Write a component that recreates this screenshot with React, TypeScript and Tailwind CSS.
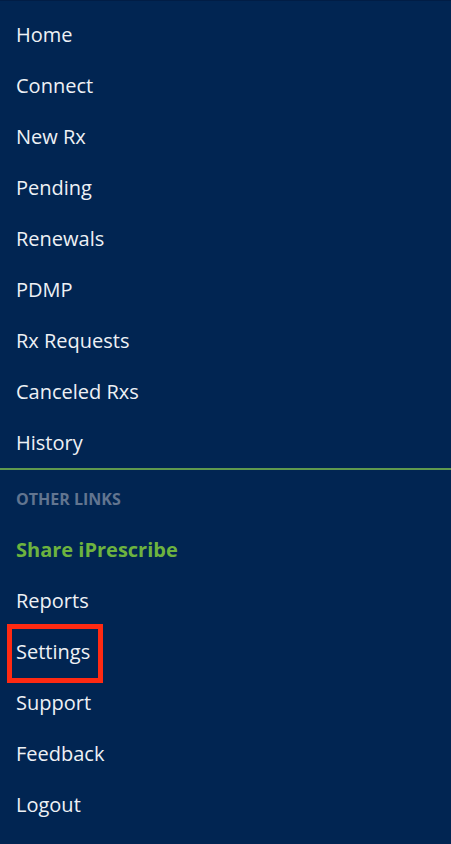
import React from "react";

const main = ["Home", "Connect", "New Rx", "Pending", "Renewals", "PDMP", "Rx Requests", "Canceled Rxs", "History"];

export default function App() {
  return (
    <div
      className="w-[451px] h-[844px] bg-[#012552] overflow-hidden border-t border-t-[#011d45]"
      style={{ fontFamily: '"Open Sans", sans-serif' }}
    >
      <div className="pt-[8px]">
        {main.map((m) => (
          <div key={m} className="h-[51px] flex items-center pl-[16px] text-[20px] text-[#eef1f5]">
            {m}
          </div>
        ))}
      </div>
      <div className="h-[2px] bg-[#5f9a4e]" />
      <div className="h-[54px] pt-[4px] flex items-center pl-[16px] text-[16px] font-bold text-[#627590]">
        OTHER LINKS
      </div>
      <div className="h-[51px] flex items-center pl-[16px] text-[20px] font-bold text-[#6db33f]">
        Share iPrescribe
      </div>
      <div className="h-[51px] flex items-center pl-[16px] text-[20px] text-[#eef1f5]">Reports</div>
      <div className="relative h-[51px] flex items-center pl-[16px] text-[20px] text-[#eef1f5]">
        Settings
        <div className="absolute left-[7px] top-[-2px] w-[96px] h-[59px] border-[5px] border-[#ff2a12]" />
      </div>
      <div className="h-[51px] flex items-center pl-[16px] text-[20px] text-[#eef1f5]">Support</div>
      <div className="h-[51px] flex items-center pl-[16px] text-[20px] text-[#eef1f5]">Feedback</div>
      <div className="h-[51px] flex items-center pl-[16px] text-[20px] text-[#eef1f5]">Logout</div>
    </div>
  );
}
